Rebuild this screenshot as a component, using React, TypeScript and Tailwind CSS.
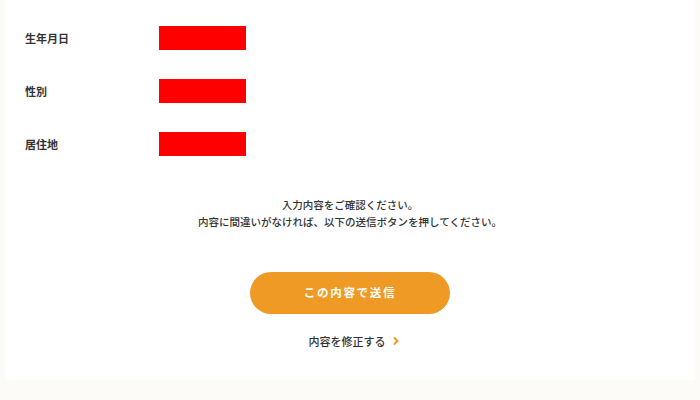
import type React from 'react';

const rows = ['生年月日', '性別', '居住地'];

const App: React.FC = () => {
  return (
    <div
      className="min-h-[400px] w-[700px] bg-[#fcfbf7] px-[5px] pb-[20px]"
      style={{ fontFamily: '"Noto Sans CJK JP", "Noto Sans", sans-serif' }}
    >
      <div className="bg-white pl-[20px] pr-[20px] pt-[26px] pb-[30px]">
        {/* 確認項目 */}
        <dl className="flex flex-col gap-[29px]">
          {rows.map((label) => (
            <div key={label} className="flex items-center">
              <dt className="w-[134px] text-[11px] font-bold text-[#333]">{label}</dt>
              <dd className="h-[24px] w-[87px] bg-[#ff0000]" />
            </div>
          ))}
        </dl>

        {/* 案内文 */}
        <p className="mt-[40px] text-center text-[10.5px] leading-[17px] font-medium text-[#333]">
          入力内容をご確認ください。
          <br />
          内容に間違いがなければ、以下の送信ボタンを押してください。
        </p>

        <div className="mt-[42px] flex flex-col items-center">
          <button className="h-[42px] w-[200px] rounded-full bg-[#f09a26] text-[11.5px] font-bold tracking-[0.15em] text-white">
            この内容で送信
          </button>
          <a className="mt-[19px] ml-[8px] flex items-center gap-[6px] text-[11px] font-medium text-[#333]">
            内容を修正する
            <svg width="8" height="10" viewBox="0 0 8 10" fill="none">
              <path d="M2 1.5 L5.5 5 L2 8.5" stroke="#f09a26" strokeWidth="2" />
            </svg>
          </a>
        </div>
      </div>
    </div>
  );
};

export default App;
